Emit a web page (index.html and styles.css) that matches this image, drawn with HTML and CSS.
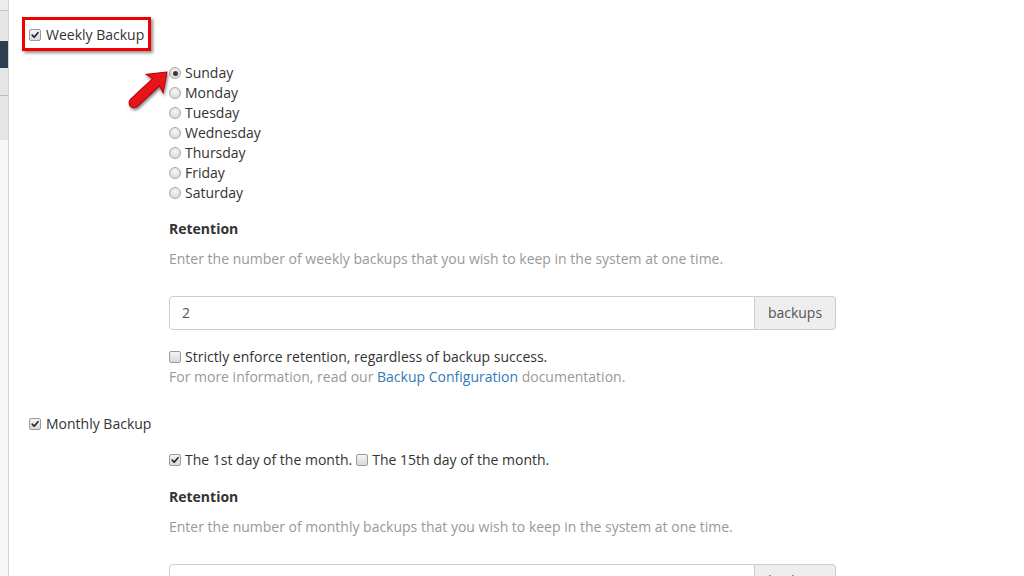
FILE: index.html
```html
<!DOCTYPE html>
<html>
<head>
<meta charset="utf-8">
<link rel="stylesheet" href="styles.css">
</head>
<body>
<div class="page">
  <aside class="sidebar">
    <div class="sb-top"></div>
    <div class="sb-gap1"></div>
    <div class="sb-active"></div>
    <div class="sb-gap2"></div>
    <div class="sb-rest"></div>
  </aside>
  <main class="main">
    <div class="highlight">
      <label class="line"><span class="cb checked"><svg viewBox="0 0 12 12"><path d="M2.6 6.2 L5 8.6 L9.6 3.2" /></svg></span>Weekly Backup</label>
    </div>

    <div class="indent days">
      <label class="line"><span class="radio checked"></span>Sunday</label>
      <label class="line"><span class="radio"></span>Monday</label>
      <label class="line"><span class="radio"></span>Tuesday</label>
      <label class="line"><span class="radio"></span>Wednesday</label>
      <label class="line"><span class="radio"></span>Thursday</label>
      <label class="line"><span class="radio"></span>Friday</label>
      <label class="line"><span class="radio"></span>Saturday</label>
    </div>

    <div class="indent">
      <div class="section-title">Retention</div>
      <div class="help">Enter the number of weekly backups that you wish to keep in the system at one time.</div>
      <div class="input-group">
        <div class="field">2</div>
        <div class="addon">backups</div>
      </div>
      <label class="line strict"><span class="cb"></span>Strictly enforce retention, regardless of backup success.</label>
      <div class="help-line">For more information, read our <a href="#">Backup Configuration</a> documentation.</div>
    </div>

    <label class="line monthly"><span class="cb checked"><svg viewBox="0 0 12 12"><path d="M2.6 6.2 L5 8.6 L9.6 3.2" /></svg></span>Monthly Backup</label>

    <div class="indent">
      <div class="line days-of-month">
        <span class="cb checked"><svg viewBox="0 0 12 12"><path d="M2.6 6.2 L5 8.6 L9.6 3.2" /></svg></span>The 1st day of the month.
        <span class="cb second"></span>The 15th day of the month.
      </div>
      <div class="section-title month-ret">Retention</div>
      <div class="help">Enter the number of monthly backups that you wish to keep in the system at one time.</div>
      <div class="input-group">
        <div class="field"></div>
        <div class="addon">backups</div>
      </div>
    </div>
  </main>
  <svg class="arrow" width="1024" height="576" viewBox="0 0 1024 576">
    <g transform="translate(167,72) rotate(-43)">
      <path d="M0,0 L-17,-12.5 L-15,-5 L-45,-5 A5,5 0 0 0 -45,5 L-15,5 L-17,12.5 Z" fill="#e8141a" stroke="#b80008" stroke-width="1"/>
    </g>
  </svg>
</div>
</body>
</html>
```
FILE: styles.css
```css
* { box-sizing: border-box; }
html, body {
  margin: 0;
  padding: 0;
  width: 1024px;
  height: 576px;
  overflow: hidden;
  background: #fff;
}
body {
  font-family: "Open Sans", "Noto Sans", sans-serif;
  font-size: 14px;
  line-height: 20px;
  color: #333;
}
.page {
  position: relative;
  display: flex;
  height: 576px;
}
.sidebar {
  width: 9px;
  flex: none;
  display: flex;
  flex-direction: column;
  border-right: 1px solid #d4d4d4;
}
.sb-top { height: 11px; background: #ececec; border-bottom: 1px solid #c9c9c9; }
.sb-gap1 { height: 30px; background: #e6e6e6; }
.sb-active { height: 27px; background: #2c3e50; }
.sb-gap2 { height: 28px; background: #e6e6e6; border-bottom: 1px solid #bdbdbd; }
.sb-rest { height: 44px; background: #e6e6e6; }
.sidebar::after { content: ""; flex: 1; background: #f7f7f7; }

.main {
  flex: 1;
  padding: 17px 0 0 13px;
  display: flex;
  flex-direction: column;
  align-items: flex-start;
}
.line {
  display: flex;
  align-items: center;
  height: 20px;
  padding-top: 2px;
  white-space: nowrap;
}
.highlight {
  border: 3px solid #f00000;
  padding: 4px 4px 4px 4px;
  box-shadow: 2px 2px 3px rgba(0,0,0,0.45);
}
.cb {
  width: 12px;
  height: 12px;
  flex: none;
  margin-right: 4px;
  border: 1px solid #9a9a9a;
  border-radius: 2px;
  background: linear-gradient(#f4f4f4, #d8d8d8);
  display: inline-flex;
  align-items: center;
  justify-content: center;
}
.cb svg { width: 12px; height: 12px; }
.cb svg path {
  fill: none;
  stroke: #222;
  stroke-width: 1.9;
  stroke-linecap: round;
  stroke-linejoin: round;
}
.highlight .cb, .monthly .cb { margin-right: 5px; }
.radio {
  width: 12px;
  height: 12px;
  flex: none;
  margin-right: 4px;
  border: 1px solid #a8a8a8;
  border-radius: 50%;
  background: radial-gradient(circle at 50% 35%, #f6f6f6, #d2d2d2);
  display: inline-flex;
  align-items: center;
  justify-content: center;
}
.radio.checked::after {
  content: "";
  width: 5px;
  height: 5px;
  border-radius: 50%;
  background: #3a3a3a;
}
.indent {
  margin-left: 147px;
  display: flex;
  flex-direction: column;
  align-items: flex-start;
}
.days { margin-top: 11px; }
.section-title {
  margin-top: 16px;
  font-weight: 700;
  height: 20px;
  padding-top: 1px;
}
.help {
  margin-top: 10px;
  color: #999;
  height: 20px;
  padding-top: 1px;
}
.input-group {
  margin-top: 28px;
  display: flex;
  width: 667px;
  height: 34px;
}
.field {
  flex: 1;
  border: 1px solid #ccc;
  border-radius: 4px 0 0 4px;
  padding: 6px 12px;
  color: #555;
  background: #fff;
}
.addon {
  width: 81px;
  border: 1px solid #ccc;
  border-left: none;
  border-radius: 0 4px 4px 0;
  background: #eee;
  color: #555;
  padding: 6px 12px;
  text-align: center;
}
.strict { margin-top: 16px; }
.help-line { color: #999; height: 20px; padding-top: 1px; }
.help-line a { color: #337ab7; text-decoration: none; }
.monthly { margin-top: 27px; margin-left: 7px; }
.days-of-month { margin-top: 16px; }
.cb.second { margin-left: 4px; }
.month-ret { margin-top: 17px; }
.arrow {
  position: absolute;
  left: 0;
  top: 0;
  pointer-events: none;
  filter: drop-shadow(1px 2px 1.5px rgba(0,0,0,0.5));
}
```
